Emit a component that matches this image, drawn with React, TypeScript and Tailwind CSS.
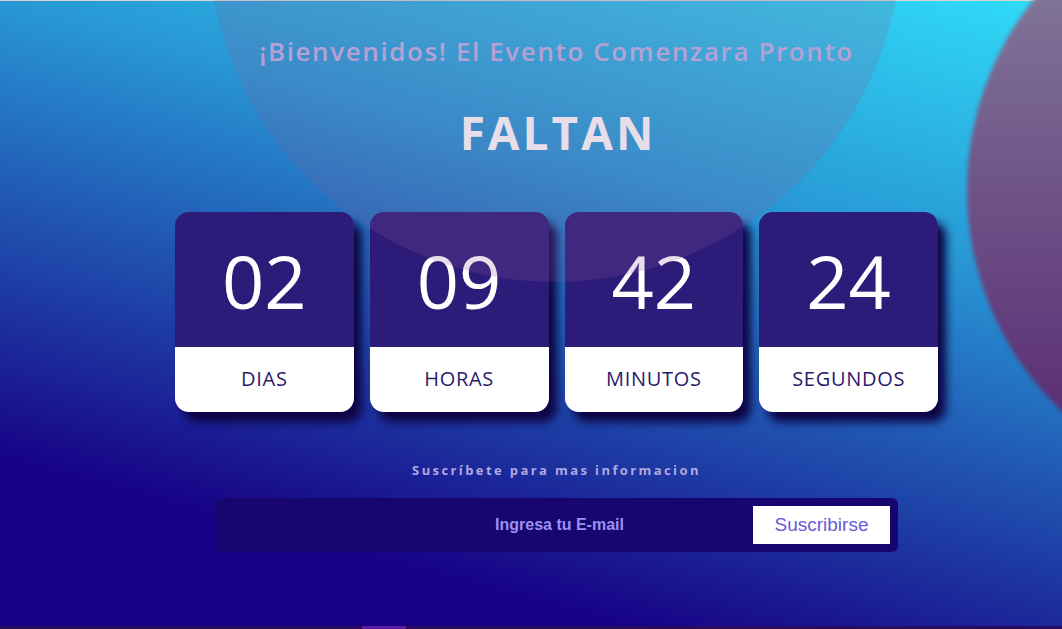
import React from 'react';

const units = [
  { value: '02', label: 'DIAS' },
  { value: '09', label: 'HORAS' },
  { value: '42', label: 'MINUTOS' },
  { value: '24', label: 'SEGUNDOS' },
];

const CountCard: React.FC<{ value: string; label: string }> = ({ value, label }) => (
  <div className="flex h-[200px] w-[178.75px] flex-col overflow-hidden rounded-[14px] shadow-[8px_10px_10px_#0e0443]">
    <div className="flex h-[135px] items-center justify-center bg-[#2d1b7a] pt-[2px] text-[74px] leading-none text-white">
      {value}
    </div>
    <div className="flex flex-1 items-center justify-center bg-white pb-[2px] text-[20px] tracking-[0.7px] text-[#2b1a6b]">
      {label}
    </div>
  </div>
);

export default function App() {
  return (
    <div className="relative h-[629px] w-full overflow-hidden bg-[linear-gradient(15deg,#170085_18%,#2898d5_69%,#30dcf8_100%)] font-['Open_Sans',sans-serif]">
      {/* right blob */}
      <div className="pointer-events-none absolute left-[967px] top-[-116px] h-[612px] w-[612px] rounded-full bg-[linear-gradient(180deg,#8a86a1_0%,#54216e_100%)] blur-[2px]" />

      <div className="h-px w-full bg-[#d6d6d6]" />

      <div className="flex flex-col items-center pl-[51px]">
        <h2 className="mt-[34px] text-[26px] font-semibold leading-[32px] tracking-[1.6px] text-[#c0b3e6]">
          ¡Bienvenidos! El Evento Comenzara Pronto
        </h2>
        <h1 className="mt-[37px] pl-[3px] text-[46px] font-bold leading-[56px] tracking-[3px] text-white">
          FALTAN
        </h1>

        <div className="mt-[52px] flex gap-4">
          {units.map((u) => (
            <CountCard key={u.label} value={u.value} label={u.label} />
          ))}
        </div>

        <p className="mt-[49px] text-[13px] font-bold leading-[18px] tracking-[2.4px] text-[#b0a8e0]">
          Suscríbete para mas informacion
        </p>

        <form
          className="mt-[19px] flex h-[54px] w-[683px] items-center rounded-[6px] bg-[#170670] p-2"
          onSubmit={(e) => e.preventDefault()}
        >
          <input
            type="email"
            placeholder="Ingresa tu E-mail"
            className="h-full min-w-0 flex-1 bg-transparent pl-[143px] text-center font-['Liberation_Sans',sans-serif] text-[16px] font-bold text-white outline-none placeholder:text-[#9d90f0]"
          />
          <button
            type="submit"
            className="h-[38px] w-[137px] bg-white font-['Liberation_Sans',sans-serif] text-[19px] text-[#6a5ad6]"
          >
            Suscribirse
          </button>
        </form>
      </div>

      {/* big translucent circle over content */}
      <div className="pointer-events-none absolute left-[208px] top-[-412px] h-[694px] w-[694px] rounded-full bg-[rgba(140,90,150,0.2)]" />

      {/* bottom bar */}
      <div className="absolute bottom-0 left-0 flex h-[3px] w-full bg-[#2a0c5c]">
        <div className="ml-[362px] h-full w-[44px] bg-[#5a1fa0]" />
      </div>
    </div>
  );
}
